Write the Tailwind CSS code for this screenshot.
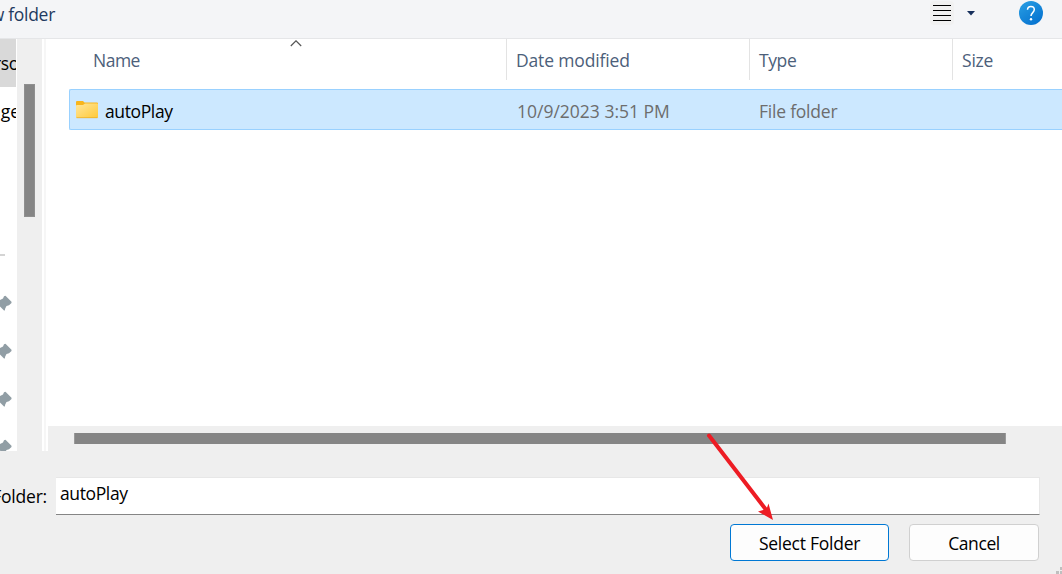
<!DOCTYPE html>
<html lang="en">
<head>
<meta charset="utf-8">
<title>Select Folder</title>
<script src="https://cdn.jsdelivr.net/npm/@tailwindcss/browser@4"></script>
</head>
<body class="w-[1062px] h-[574px] overflow-hidden bg-[#efefef] font-['Open_Sans','Noto_Sans',sans-serif] text-[17.5px] leading-6 whitespace-nowrap text-black">
<div class="relative flex h-[574px] w-[1062px] flex-col overflow-hidden">
  <header class="flex h-[39px] shrink-0 border-b border-[#e5e6e8] bg-[#f4f5f7] text-[#1f3a5f]">
    <div class="flex w-[55px] justify-end pt-[2px] tracking-[-0.3px]"><span>New folder</span></div>
    <div class="ml-auto flex pr-[18px]">
      <div class="mt-px mr-[13px] h-6 w-6 rounded-sm bg-[#f1f1f1]">
        <svg class="h-6 w-6" viewBox="0 0 24 24" stroke="#000" stroke-width="1"><path d="M3 4.500h18M3 9.500h18M3 14.500h18M3 19.500h18"/></svg>
      </div>
      <svg class="mt-[11px] mr-[43px] h-[5px] w-2" viewBox="0 0 8 5"><path d="M0 0h8L4 4.500z" fill="#17305c"/></svg>
      <svg class="mt-px h-6 w-[26px]" viewBox="0 0 26 24">
        <defs><linearGradient id="help" x1="0" y1="0" x2=".7" y2="1"><stop stop-color="#2aa0e4"/><stop offset="1" stop-color="#0673d0"/></linearGradient></defs>
        <circle cx="13" cy="12" r="12" fill="url(#help)"/>
        <path d="M9.500 8.800c.1-2 1.400-3.300 3.400-3.300s3.400 1.200 3.400 3.100c0 2.900-3.300 3.200-3.300 6.500" fill="none" stroke="#fff" stroke-width="1.500"/><circle cx="13" cy="18.200" r="1.200" fill="#fff"/>
      </svg>
    </div>
  </header>

  <main class="flex h-[412px] shrink-0 bg-white">
    <nav class="flex w-[17px] shrink-0 flex-col overflow-hidden">
      <div class="flex h-12 w-4 shrink-0 justify-end overflow-hidden bg-[#d9d9d9] pt-[12px]"><span class="-mr-[3px] tracking-[-0.3px]">Perso</span></div>
      <div class="flex h-12 w-4 shrink-0 justify-end overflow-hidden pt-[12px]"><span class="-mr-[4px]">Image</span></div>
      <div class="mt-[119px] h-0.5 w-[5px] shrink-0 bg-[#d4d4d4]"></div>
      <div class="mt-[39px] flex flex-col gap-8 text-[#919ea5]">
        <svg class="h-4 w-3 shrink-0" viewBox="0 0 12 16"><path d="M0 5 3 3.500 4 1.200 5.500 .8 11.500 6.800v1.100L9 10.300 6.500 11 5.200 13.500 4.800 15.500H4L0 11.500z" fill="currentColor"/></svg>
        <svg class="h-4 w-3 shrink-0" viewBox="0 0 12 16"><path d="M0 5 3 3.500 4 1.200 5.500 .8 11.500 6.800v1.100L9 10.300 6.500 11 5.200 13.500 4.800 15.500H4L0 11.500z" fill="currentColor"/></svg>
        <svg class="h-4 w-3 shrink-0" viewBox="0 0 12 16"><path d="M0 5 3 3.500 4 1.200 5.500 .8 11.500 6.800v1.100L9 10.300 6.500 11 5.200 13.500 4.800 15.500H4L0 11.500z" fill="currentColor"/></svg>
        <svg class="h-4 w-3 shrink-0" viewBox="0 0 12 16"><path d="M0 5 3 3.500 4 1.200 5.500 .8 11.500 6.800v1.100L9 10.300 6.500 11 5.200 13.500 4.800 15.500H4L0 11.500z" fill="currentColor"/></svg>
      </div>
    </nav>
    <div class="w-[25px] shrink-0 bg-[#efefef] pt-[45px] pl-[7px]"><div class="h-[133px] w-[11px] border border-[#8f8f8f] bg-[#858585]"></div></div>
    <div class="ml-0.5 w-0.5 shrink-0 bg-[#f6f6f6]"></div>
    <section class="ml-0.5 flex w-[1014px] flex-col">
      <div class="relative flex h-[41px] shrink-0 text-[#4c607a]">
        <div class="w-[459px] border-r border-[#e3e3e3] pt-[9px] pl-[45px] tracking-[-0.5px]">Name</div>
        <div class="w-[243px] border-r border-[#e3e3e3] pt-[9px] pl-[9px] tracking-[-0.15px]">Date modified</div>
        <div class="w-[203px] border-r border-[#e3e3e3] pt-[9px] pl-[9px] tracking-[-0.4px]">Type</div>
        <div class="pt-[9px] pl-[9px] tracking-[-0.2px]">Size</div>
        <svg class="absolute top-px left-[241.500px] h-[7px] w-3" viewBox="0 0 12 7"><path d="M.8 6 6 .8 11.200 6" fill="none" stroke="#555" stroke-width="1.200"/></svg>
      </div>
      <div class="mt-[9px] ml-[21px] flex h-[41px] shrink-0 rounded-l-xs border border-r-0 border-[#99d1ff] bg-[#cce8ff] text-[#6d6d6d]">
        <div class="flex w-[447px] pl-1.5 text-black">
          <svg class="mt-[11px] mr-[7px] h-[18px] w-[22px]" viewBox="0 0 22 18">
            <defs><linearGradient id="folder" x1="0" y1="0" x2="1" y2="1"><stop stop-color="#ffe69c"/><stop offset="1" stop-color="#ffc937"/></linearGradient></defs>
            <path d="M0 1Q0 0 1 0h6l1.500 1.500h12.500q1 0 1 1V7H0z" fill="#f8b51c"/>
            <path d="M0 5q0-1 1-1h6l2-1.500h12q1 0 1 1V16q0 1-1 1H1q-1 0-1-1z" fill="url(#folder)"/><path d="M.5 16.700h21" stroke="#e5a923" stroke-width=".7"/>
          </svg>
          <span class="pt-[9px] tracking-[-0.38px]">autoPlay</span>
        </div>
        <div class="w-[242px] pt-[9px]">10/9/2023 3:51 PM</div>
        <div class="pt-[9px] tracking-[-0.22px]">File folder</div>
      </div>
      <div class="mt-auto h-[25px] bg-[#efefef] pt-[7px] pl-[26px]"><div class="h-[11px] w-[932px] border-x border-[#9a9a9a] bg-[#858585]"></div></div>
    </section>
  </main>

  <footer class="flex flex-col">
    <div class="mt-[26px] flex h-[38px]">
      <div class="flex w-[47px] shrink-0 justify-end pt-[7px] tracking-[-0.2px]"><span>Folder:</span></div>
      <div class="ml-[9px] w-[984px] border border-l-0 border-[#e7e7e7] border-b-[#858585] bg-white pt-[3px] pl-1 tracking-[-0.38px]">autoPlay</div>
    </div>
    <div class="mt-[9px] flex justify-end gap-5 pr-[23px]">
      <div class="flex h-[37px] w-[159px] justify-center rounded border border-[#0078d4] bg-[#fdfdfd] pt-[6px] tracking-[-0.25px]">Select Folder</div>
      <div class="flex h-[37px] w-[130px] justify-center rounded border border-[#d0d0d0] bg-[#fdfdfd] pt-[6px] tracking-[-0.4px]">Cancel</div>
    </div>
  </footer>

  <svg class="absolute top-[430px] left-[700px] h-[95px] w-[80px]" viewBox="700 430 80 95">
    <path d="M709 435.500 767 511" stroke="#ed1c24" stroke-width="4" stroke-linecap="round"/>
    <path d="M773 520 768.500 503.500 766.500 509 758 511.500z" fill="#ed1c24"/>
  </svg>
  <svg class="absolute right-0 bottom-0 h-[7px] w-[6px]" viewBox="0 0 6 7" fill="#bfbfbf"><path d="M4 0h2v3H4zM0 4h3v3H0zM4 4h2v3H4z"/></svg>
</div>
</body>
</html>
